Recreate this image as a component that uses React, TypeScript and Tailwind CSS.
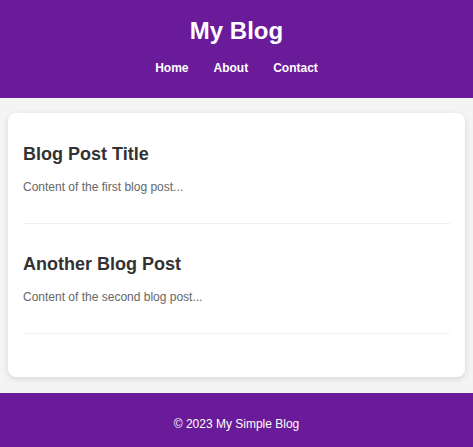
const posts = [
  { title: 'Blog Post Title', body: 'Content of the first blog post...' },
  { title: 'Another Blog Post', body: 'Content of the second blog post...' },
]

export default function App() {
  return (
    <div className="min-h-[447px] bg-[#f4f4f4] font-['Liberation_Sans',Arial,sans-serif]">
      <header className="h-[98px] bg-[#6a1b9a] pt-[17px] text-center text-white">
        <h1 className="text-[24px] font-bold leading-[28px]">My Blog</h1>
        <nav className="mt-[16px]">
          <ul className="flex justify-center gap-[25px] text-[12px] font-bold leading-[14px]">
            <li>Home</li>
            <li>About</li>
            <li>Contact</li>
          </ul>
        </nav>
      </header>

      <main className="px-[8px] pt-[15px] pb-[16px]">
        <div className="rounded-[8px] bg-white px-[15px] pt-[16px] pb-[28px] shadow-[0_2px_6px_rgba(0,0,0,0.12)]">
          {posts.map((p) => (
            <article key={p.title} className="mb-[15px] border-b border-[#f0f0f0] pt-[15px] pb-[29px]">
              <h2 className="text-[18px] font-bold leading-[21px] text-[#333]">{p.title}</h2>
              <p className="mt-[15px] text-[12px] leading-[14px] text-[#666]">{p.body}</p>
            </article>
          ))}
        </div>
      </main>

      <footer className="h-[54px] bg-[#6a1b9a] pt-[24px] text-center text-[12px] leading-[14px] text-white">
        © 2023 My Simple Blog
      </footer>
    </div>
  )
}
